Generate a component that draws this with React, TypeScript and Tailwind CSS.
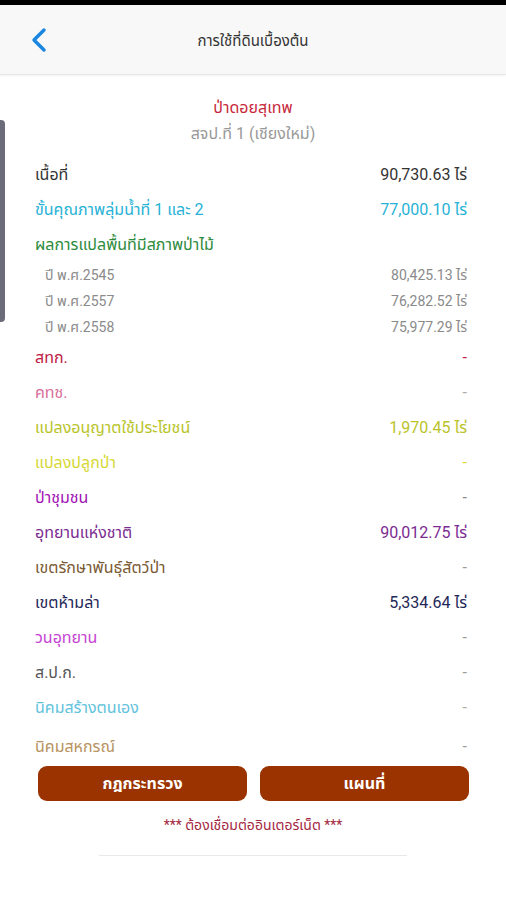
import React from "react";

type Row = { label: string; value: string; color: string; vcolor?: string; sub?: boolean; last?: boolean };

const rows: Row[] = [
  { label: "เนื้อที่", value: "90,730.63 ไร่", color: "text-[#333333]" },
  { label: "ขั้นคุณภาพลุ่มน้ำที่ 1 และ 2", value: "77,000.10 ไร่", color: "text-[#27b2d6]" },
  { label: "ผลการแปลพื้นที่มีสภาพป่าไม้", value: "", color: "text-[#2e8b3c]" },
  { label: "ปี พ.ศ.2545", value: "80,425.13 ไร่", color: "text-[#8a8a8a]", sub: true },
  { label: "ปี พ.ศ.2557", value: "76,282.52 ไร่", color: "text-[#8a8a8a]", sub: true },
  { label: "ปี พ.ศ.2558", value: "75,977.29 ไร่", color: "text-[#8a8a8a]", sub: true },
  { label: "สทก.", value: "-", color: "text-[#c01a44]" },
  { label: "คทช.", value: "-", color: "text-[#d9709a]", vcolor: "text-[#aaaaaa]" },
  { label: "แปลงอนุญาตใช้ประโยชน์", value: "1,970.45 ไร่", color: "text-[#b9c42a]" },
  { label: "แปลงปลูกป่า", value: "-", color: "text-[#d6d833]" },
  { label: "ป่าชุมชน", value: "-", color: "text-[#a012b4]", vcolor: "text-[#888888]" },
  { label: "อุทยานแห่งชาติ", value: "90,012.75 ไร่", color: "text-[#7b2c92]" },
  { label: "เขตรักษาพันธุ์สัตว์ป่า", value: "-", color: "text-[#7a5a34]", vcolor: "text-[#999999]" },
  { label: "เขตห้ามล่า", value: "5,334.64 ไร่", color: "text-[#1f2858]" },
  { label: "วนอุทยาน", value: "-", color: "text-[#c544d2]", vcolor: "text-[#999999]" },
  { label: "ส.ป.ก.", value: "-", color: "text-[#555555]", vcolor: "text-[#999999]" },
  { label: "นิคมสร้างตนเอง", value: "-", color: "text-[#62c3dd]", vcolor: "text-[#aaaaaa]" },
  { label: "นิคมสหกรณ์", value: "-", color: "text-[#b8935f]", vcolor: "text-[#999999]", last: true },
];

export default function App() {
  return (
    <div
      className="relative w-[506px] h-[900px] bg-white overflow-hidden"
      style={{ fontFamily: "Roboto, 'Noto Sans', 'Noto Sans Thai', sans-serif" }}
    >
      <div className="h-[5px] bg-black" />
      <div className="h-[70px] bg-[#f8f8f8] border-b border-[#e6e6e6] shadow-[0_1px_2px_rgba(0,0,0,0.05)] flex items-center relative">
        <div className="absolute left-[30px] top-[22px]">
          <svg width="18" height="26" viewBox="0 0 18 26">
            <path d="M14 3 L4 13 L14 23" fill="none" stroke="#1a86e0" strokeWidth="3.4" strokeLinecap="round" strokeLinejoin="round" />
          </svg>
        </div>
        <div className="flex-1 text-center text-[15px] text-[#333333] pt-[3px]">การใช้ที่ดินเบื้องต้น</div>
      </div>

      <div className="absolute left-0 top-[120px] w-[5px] h-[202px] bg-[#6c6b7a] rounded-r-[4px]" />

      <div className="pt-[20px]">
        <div className="text-center text-[16px] leading-[26px] text-[#c8283c]">ป่าดอยสุเทพ</div>
        <div className="text-center text-[16px] leading-[26px] text-[#999999]">สจป.ที่ 1 (เชียงใหม่)</div>
        <div className="mt-[10px] pl-[35px] pr-[39px]">
          {rows.map((r, i) => (
            <div
              key={i}
              className={
                r.sub
                  ? "h-[26px] flex items-center justify-between text-[14px] pl-[10px]"
                  : r.last
                  ? "h-[35px] mt-[4px] flex items-center justify-between text-[16px]"
                  : "h-[35px] flex items-center justify-between text-[16px]"
              }
            >
              <span className={r.color}>{r.label}</span>
              <span className={r.vcolor ?? r.color}>{r.value}</span>
            </div>
          ))}
        </div>
        <div className="mt-[2px] pl-[38px] pr-[37px] flex gap-[13px]">
          <button className="flex-1 h-[35px] rounded-[9px] bg-[#9a3300] text-white text-[16px] font-bold">กฎกระทรวง</button>
          <button className="flex-1 h-[35px] rounded-[9px] bg-[#9a3300] text-white text-[16px] font-bold">แผนที่</button>
        </div>
        <div className="mt-[14px] text-center text-[14px] leading-[20px] text-[#a3283f]">*** ต้องเชื่อมต่ออินเตอร์เน็ต ***</div>
        <div className="mt-[20px] mx-auto w-[308px] h-[1px] bg-[#e8e8e8]" />
      </div>
    </div>
  );
}
